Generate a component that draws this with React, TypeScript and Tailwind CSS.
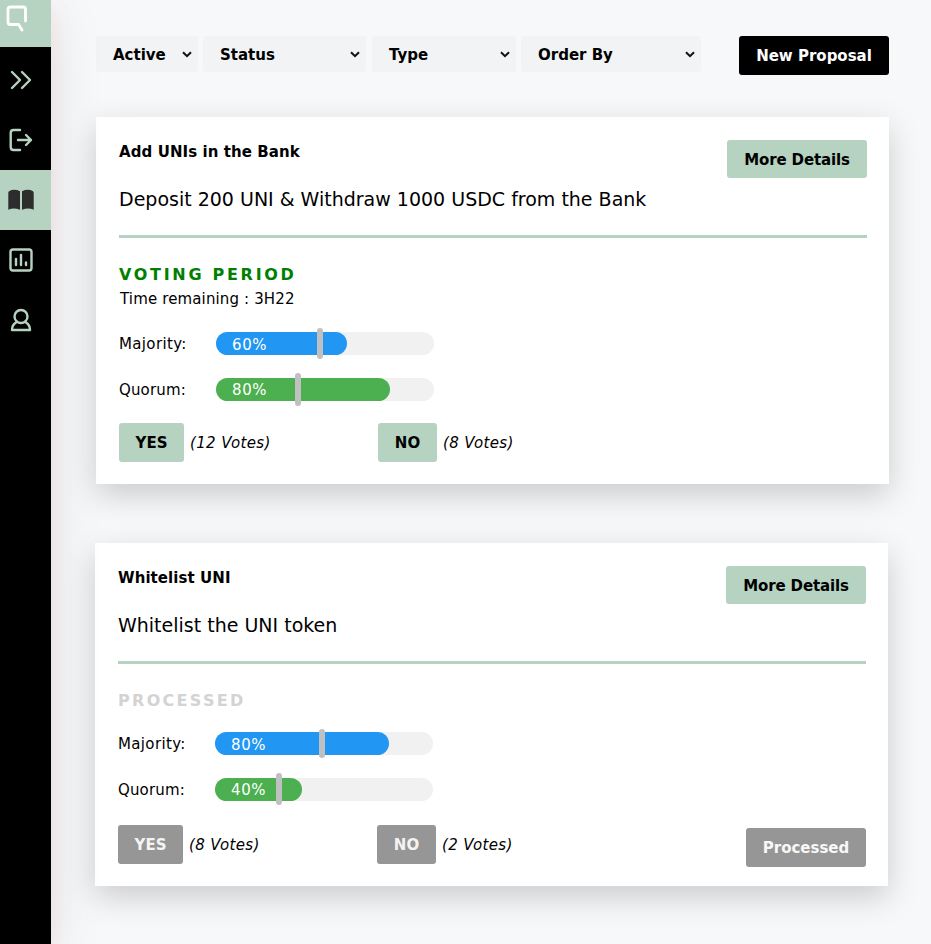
import React from 'react';

type Meter = { value: number; marker: string; fill: string };
type Proposal = {
  title: string;
  text: string;
  open: boolean;
  majority: Meter;
  quorum: Meter;
  yes: string;
  no: string;
};

const proposals: Proposal[] = [
  {
    title: 'Add UNIs in the Bank',
    text: 'Deposit 200 UNI & Withdraw 1000 USDC from the Bank',
    open: true,
    majority: { value: 60, marker: 'left-[101px] -top-[4px] h-[31px]', fill: 'bg-[#2196f3] pt-[3px]' },
    quorum: { value: 80, marker: 'left-[79px] -top-[5px] h-[33px]', fill: 'bg-[#4caf50] pt-[2px]' },
    yes: '(12 Votes)',
    no: '(8 Votes)',
  },
  {
    title: 'Whitelist UNI',
    text: 'Whitelist the UNI token',
    open: false,
    majority: { value: 80, marker: 'left-[104px] -top-[3px] h-[29px]', fill: 'bg-[#2196f3] pt-[3px]' },
    quorum: { value: 40, marker: 'left-[61px] -top-[5px] h-[32px]', fill: 'bg-[#4caf50] pt-[2px]' },
    yes: '(8 Votes)',
    no: '(2 Votes)',
  },
];

const filters = [
  { label: 'Active', box: 'w-[102px] mr-[5px]' },
  { label: 'Status', box: 'w-[163px] mr-[6px]' },
  { label: 'Type', box: 'w-[144px] mr-[5px]' },
  { label: 'Order By', box: 'w-[180px]' },
];

function Chevron() {
  return (
    <svg className="h-[7px] w-[10px]" viewBox="0 0 10 7" fill="none" stroke="#111" strokeWidth="2">
      <path d="M1 1.2 5 5.2 9 1.2" />
    </svg>
  );
}

function Bar({ label, spacing, meter }: { label: string; spacing: string; meter: Meter }) {
  return (
    <div className="flex h-[23px] items-center text-[15px]">
      <span className={`w-[97px] pt-[2px] ${spacing}`}>{label}</span>
      <div className="relative h-[23px] w-[218px] rounded-full bg-[#f1f1f1]">
        <div
          className={`flex h-full items-center rounded-full pl-4 tracking-[0.6px] text-white ${meter.fill}`}
          style={{ width: `${meter.value}%` }}
        >
          {meter.value}%
        </div>
        <div className={`absolute w-[6px] rounded-[3px] bg-[#c0c0c0] ${meter.marker}`} />
      </div>
    </div>
  );
}

function Vote({ label, votes, open, size }: { label: string; votes: string; open: boolean; size: string }) {
  return (
    <div className="flex w-[259px] items-center gap-[6px]">
      <button
        className={`h-[39px] rounded-[3px] pt-px text-[15px] font-bold ${size} ${
          open ? 'bg-[#b5d3c0] text-black' : 'bg-[#969696] text-[#f4f4f4]'
        }`}
      >
        {label}
      </button>
      <span className="pt-px text-[15px] italic tracking-[0.36px]">{votes}</span>
    </div>
  );
}

function Card({ item }: { item: Proposal }) {
  return (
    <section
      className={`w-[793px] bg-white px-[23px] pt-[23px] shadow-[0_11px_30px_rgba(0,0,0,0.18)] ${
        item.open ? 'ml-px h-[367px]' : 'mt-[59px] h-[343px]'
      }`}
    >
      <div className="flex h-[38px] items-start justify-between">
        <h2 className="pt-px text-[15px] font-bold leading-[22px] tracking-[0.08px]">{item.title}</h2>
        <button className="mr-[-1px] h-[38px] w-[140px] rounded-[3px] bg-[#b5d3c0] pt-[2px] text-[15px] font-bold tracking-[-0.12px]">
          More Details
        </button>
      </div>
      <p className="mt-[7px] h-[28px] text-[19px] leading-[28px]">{item.text}</p>
      <div className="mr-[-1px] mt-[22px] h-[3px] bg-[#b5d3c0]" />
      <div className={item.open ? 'h-[94px] pt-[25px]' : 'h-[68px] pt-[25px]'}>
        <h3
          className={`text-[16px] font-bold leading-[24px] ${
            item.open ? 'tracking-[2.7px] text-[#008000]' : 'tracking-[2.3px] text-[#d3d3d3]'
          }`}
        >
          {item.open ? 'VOTING PERIOD' : 'PROCESSED'}
        </h3>
        {item.open && <p className="pl-px text-[15px] leading-[24px] tracking-[0.14px]">Time remaining : 3H22</p>}
      </div>
      <Bar label="Majority:" spacing="tracking-[0.35px]" meter={item.majority} />
      <div className="h-[23px]" />
      <Bar label="Quorum:" spacing="tracking-[0.15px]" meter={item.quorum} />
      <div className={`flex items-start ${item.open ? 'mt-[22px]' : 'mt-[24px]'}`}>
        <Vote label="YES" votes={item.yes} open={item.open} size="w-[65px]" />
        <Vote label="NO" votes={item.no} open={item.open} size="w-[59px]" />
        {!item.open && (
          <button className="mr-[-1px] mt-[3px] ml-auto h-[39px] w-[120px] rounded-[3px] bg-[#969696] pt-px text-[15px] font-bold text-[#f8f8f8]">
            Processed
          </button>
        )}
      </div>
    </section>
  );
}

function Sidebar() {
  const line = {
    fill: 'none',
    stroke: '#b5d3c0',
    strokeWidth: 2.4,
    strokeLinecap: 'round' as const,
    strokeLinejoin: 'round' as const,
  };
  return (
    <nav className="z-10 h-full w-[51px] shrink-0 bg-black shadow-[0_8px_26px_rgba(255,0,0,0.08),0_10px_60px_rgba(0,0,0,0.09)]">
      <div className="h-[47px] bg-[#b5d3c0]">
        <svg className="h-[47px] w-[51px]" viewBox="0 0 51 47" {...line} stroke="#fff" strokeWidth={2.8}>
          <path d="M25.500 21V9.500Q25.500 7 23 7H10.500Q8 7 8 9.500V22Q8 24.500 10.500 24.500H18.500L22 30" />
        </svg>
      </div>
      <div className="h-[63px] pt-[3px]">
        <svg className="h-[60px] w-[51px]" viewBox="0 0 51 60" {...line}>
          <path d="M12 22 20 30 12 38M22 22 30 30 22 38" />
        </svg>
      </div>
      <div className="h-[60px]">
        <svg className="h-[60px] w-[51px]" viewBox="0 0 51 60" {...line}>
          <path d="M20 20H13.500Q10.700 20 10.700 23V37Q10.700 40 13.500 40H20M18 30H31M26 25 31 30 26 35" />
        </svg>
      </div>
      <div className="h-[60px] bg-[#b5d3c0]">
        <svg className="h-[60px] w-[51px]" viewBox="0 0 51 60" fill="#2d2d2d">
          <path d="M20 21.200Q14 18.500 9 21.200Q8.300 22 8.300 23V39.800Q13.500 37.200 20 39.800ZM22 21.200Q28 18.500 33 21.200Q33.700 22 33.700 23V39.800Q28.500 37.200 22 39.800Z" />
        </svg>
      </div>
      <div className="h-[60px]">
        <svg className="h-[60px] w-[51px]" viewBox="0 0 51 60" {...line}>
          <rect x="10.500" y="19.500" width="21" height="21" rx="2.500" />
          <path d="M16 29V35M21 25V35M26 32.500V35" />
        </svg>
      </div>
      <div className="h-[60px]">
        <svg className="h-[60px] w-[51px]" viewBox="0 0 51 60" {...line}>
          <circle cx="21" cy="26.500" r="6.500" />
          <path d="M16 32.500Q12 35 12 40H30Q30 35 26 32.500" />
        </svg>
      </div>
    </nav>
  );
}

export default function App() {
  return (
    <div className="flex h-[944px] w-[931px] overflow-hidden bg-[#f7f8fa] font-['Verdana','DejaVu_Sans',sans-serif] text-black">
      <Sidebar />
      <main className="flex-1 pl-[44px] pt-[36px]">
        <div className="ml-px flex h-[81px] w-[793px] items-start">
          {filters.map((f) => (
            <div
              key={f.label}
              className={`flex h-[36px] items-center justify-between rounded-[3px] bg-[#f1f3f5] pl-[17px] pr-[6px] text-[15px] font-bold ${f.box}`}
            >
              <span className="pt-[2px]">{f.label}</span>
              <Chevron />
            </div>
          ))}
          <button className="ml-auto h-[39px] w-[150px] rounded-[3px] bg-black pt-px text-[15px] font-bold text-white">
            New Proposal
          </button>
        </div>
        {proposals.map((p) => (
          <Card key={p.title} item={p} />
        ))}
      </main>
    </div>
  );
}
